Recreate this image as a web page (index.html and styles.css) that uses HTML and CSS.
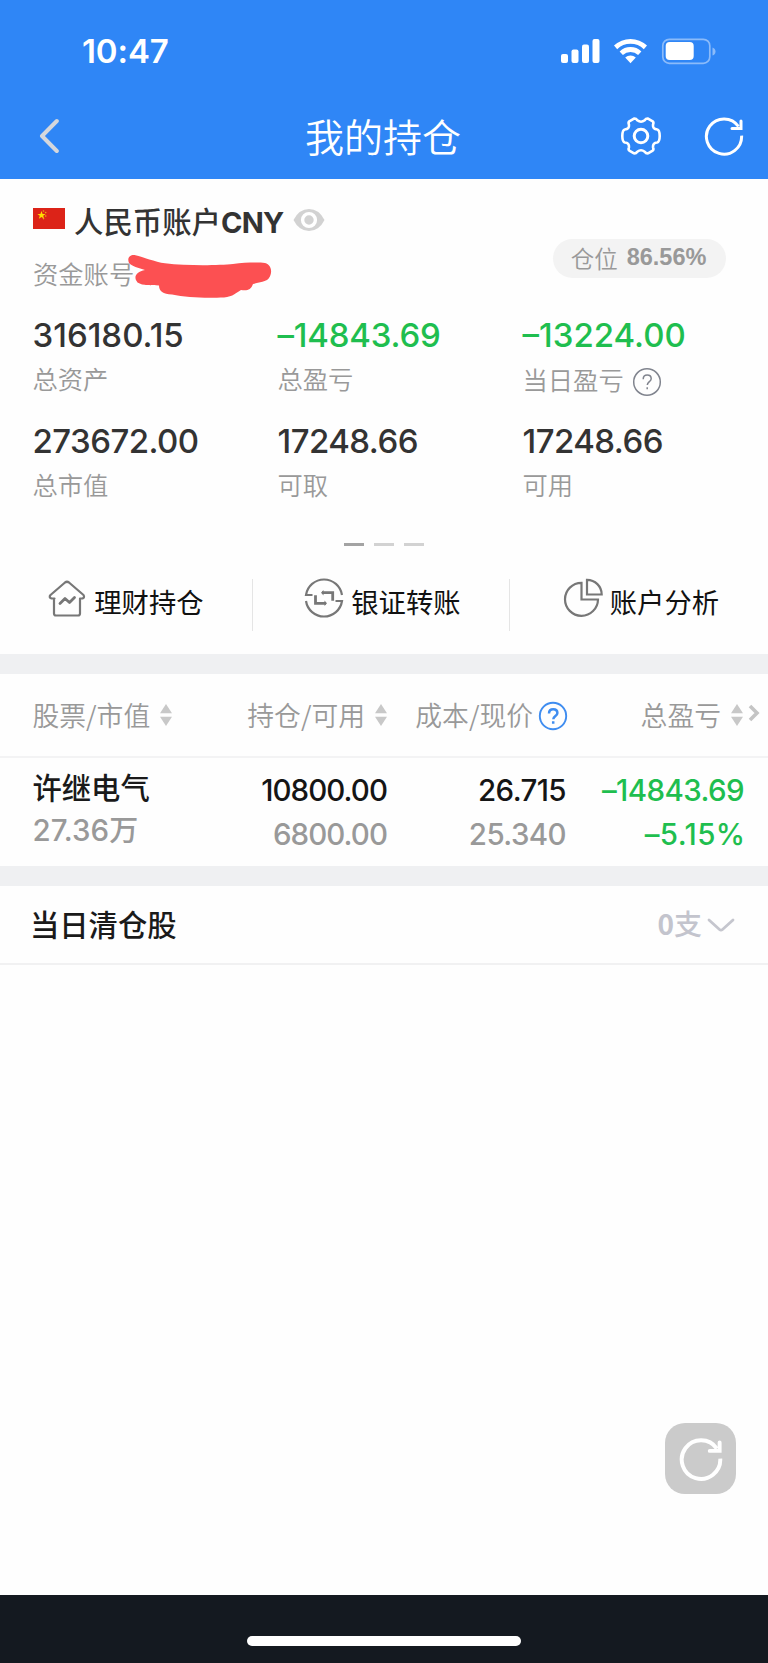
FILE: index.html
```html
<!DOCTYPE html>
<html lang="zh-CN">
<head>
<meta charset="utf-8">
<title>我的持仓</title>
<link rel="stylesheet" href="styles.css">
</head>
<body>
<svg width="0" height="0" class="defs">
  <symbol id="sort" viewBox="0 0 12 22"><path d="M6 0l6 9.3H0zM0 12.7h12L6 22z" fill="#c8c8c8"/></symbol>
  <symbol id="reload" viewBox="0 0 42 42">
    <path d="M38.6 20.6A17.6 17.6 0 1 1 35.500 11.500" fill="none" stroke="currentColor" stroke-linecap="butt"/>
    <path d="M38 6v7.600h-9" fill="none" stroke="currentColor" stroke-linecap="round"/>
  </symbol>
</svg>
<header class="header">
  <div class="status">
    <span class="time">10:47</span>
    <svg class="status-icons" width="156" height="26" viewBox="0 0 156 26" fill="#fff">
      <rect x="0" y="15" width="7" height="9" rx="2"/><rect x="10.5" y="10.5" width="7" height="13.5" rx="2"/><rect x="21" y="5.5" width="7" height="18.5" rx="2"/><rect x="31.5" y="0" width="7" height="24" rx="2"/>
      <path d="M53 6.6a24 24 0 0 1 33 0l-3.2 3.6a18.7 18.7 0 0 0-26.600 0z"/>
      <path d="M58.600 12.400a15.800 15.800 0 0 1 21.800 0l-3.300 3.700a10.900 10.900 0 0 0-15.200 0z"/>
      <path d="M64.200 18.600a8 8 0 0 1 10.600 0L69.500 24.300z"/>
      <rect x="101.800" y="0.300" width="47" height="24" rx="6.500" fill="none" stroke="#8bbbfa" stroke-width="1.700"/>
      <rect x="104.700" y="3" width="28" height="18" rx="4"/>
      <path d="M151.500 8.500q3 1 3 4t-3 4z" fill="#8bbbfa"/>
    </svg>
  </div>
  <div class="nav">
    <svg class="back" width="20" height="36" viewBox="0 0 20 36"><path d="M17.800 3L3 18L17.800 33" fill="none" stroke="#d5d7dc" stroke-width="4" stroke-linecap="round" stroke-linejoin="round"/></svg>
    <h1 class="title">我的持仓</h1>
    <svg class="gear" width="40" height="38" viewBox="0 0 40 38" fill="none" stroke="#fff" stroke-width="2.600" stroke-linejoin="round">
      <path d="M13 1.600Q15 1.300 16.300 3.300Q20 6.200 23.700 3.300Q25 1.300 27 1.600L31.700 4.300Q33 5.400 32 7.800Q31.600 12.300 36.200 12.500Q38.600 13 38.700 19Q38.600 25 36.200 25.500Q31.600 25.700 32 30.200Q33 32.500 31.700 33.600L27 36.300Q25 36.600 23.700 34.700Q20 31.800 16.300 34.700Q15 36.600 13 36.300L8.300 33.600Q7 32.500 8 30.200Q8.400 25.700 3.800 25.500Q1.400 25 1.300 19Q1.400 13 3.800 12.500Q8.400 12.300 8 7.800Q7 5.400 8.300 4.300Z"/>
      <circle cx="20" cy="19" r="6.800" stroke-width="3"/>
    </svg>
    <svg class="nav-reload" width="42" height="42"><use href="#reload"/></svg>
  </div>
</header>

<section class="account">
  <div class="account-head">
    <div class="account-id">
      <div class="currency">
        <svg class="flag" width="32" height="21" viewBox="0 0 32 21"><path fill="#dc2318" d="M0 0h32v21H0z"/><path fill="#ffde00" d="M8.500 3l1.100 2.900h3l-2.400 1.900.9 3-2.600-1.800-2.600 1.800.9-3-2.400-1.900h3z"/><g fill="#e9a413"><circle cx="10.500" cy="3" r=".8"/><circle cx="12.700" cy="4.600" r=".8"/><circle cx="12.700" cy="8" r=".8"/><circle cx="10.500" cy="10.600" r=".8"/></g></svg>
        <span class="currency-name">人民币账户<b class="latin">CNY</b></span>
        <svg class="eye" width="32" height="24" viewBox="0 0 32 24"><path d="M.5 12Q6 1 16 1t15.500 11Q26 23 16 23T.5 12z" fill="#d2d2d2"/><circle cx="16" cy="12" r="6.400" fill="none" stroke="#fff" stroke-width="3.400"/></svg>
      </div>
      <div class="fund">资金账号
        <svg class="scribble" width="146" height="46" viewBox="0 0 146 46"><path fill="#fc5052" d="M8.500 1.200C16 2.800 28 8 38 9.200C60 12 92 11.400 106 10C118 8.500 131 8.300 138 9C145 11 145.500 19 142 24C140 28 130 28.500 126 30C124 36 120 37 114 36C110 38 106 43 97 43.400C82 44 60 44 45 40.500C36 40 32 37 32 31.500C24 31 16 32 10.500 28.500C6 23 9 18 18 16C12 14 4 12 2 9C-.5 3 4 .2 8.500 1.200z"/></svg>
      </div>
    </div>
    <div class="pill">仓位 <b>86.56%</b></div>
  </div>
  <div class="stats">
    <div class="stat"><div class="num loose">316180.15</div><div class="label">总资产</div></div>
    <div class="stat"><div class="num green snug">–14843.69</div><div class="label">总盈亏</div></div>
    <div class="stat"><div class="num green loose">–13224.00</div><div class="label">当日盈亏<svg class="help" width="30" height="30" viewBox="0 0 30 30" fill="none" stroke="#80848e"><circle cx="15" cy="15" r="13.300" stroke-width="1.500"/><path d="M11.200 12.200q0-4.200 4-4.200t4 3.700c0 3-3.900 3-3.900 6.400M15.200 20.300v2" stroke-width="1.500"/></svg></div></div>
    <div class="stat"><div class="num">273672.00</div><div class="label">总市值</div></div>
    <div class="stat"><div class="num">17248.66</div><div class="label">可取</div></div>
    <div class="stat"><div class="num">17248.66</div><div class="label">可用</div></div>
  </div>
  <div class="pager"><i class="on"></i><i></i><i></i></div>
  <nav class="actions">
    <a class="action"><svg width="40" height="40" viewBox="0 0 40 40" fill="none" stroke="#777" stroke-width="2.200" stroke-linejoin="round" stroke-linecap="round"><path d="M7.500 20.500H4.500Q1.500 19.500 3.500 17L18 4.500Q20 3 22 4.500L36.500 17Q38 19.500 35.500 20.500H33V35.500Q33 37.500 31 37.500H9Q7 37.500 7 35.500V20.500"/><path d="M13 25.500L18 20.500L22.500 24.500L27.500 19.500" stroke-width="2.800"/></svg>理财持仓</a>
    <a class="action"><svg width="40" height="40" viewBox="0 0 40 40" fill="none" stroke="#777" stroke-width="2.200"><path d="M8.500 17H2A18.200 18.200 0 0 1 38 17M31.500 23H38A18.200 18.200 0 0 1 2 23"/><path d="M18 14.700H28.700V22.700M22 25.300H11.500V17.300" stroke-width="2.800"/><path d="M19.500 12v5.400l-2.500-2.700zM20.500 22.600v5.400l2.500-2.700z" fill="#777" stroke="none"/></svg>银证转账</a>
    <a class="action"><svg width="40" height="40" viewBox="0 0 40 40" fill="none" stroke="#777" stroke-width="2.200"><path d="M18.500 4.800A16.500 16.500 0 1 0 35 21.500H18.500z"/><path d="M24 1.800V16.500H38.700A14.700 14.700 0 0 0 24 1.800z"/></svg>账户分析</a>
  </nav>
</section>

<section class="holdings">
  <div class="cols thead">
    <div class="c1">股票/市值<svg class="sort"><use href="#sort"/></svg></div>
    <div class="c2">持仓/可用<svg class="sort"><use href="#sort"/></svg></div>
    <div class="c3">成本/现价<svg class="help-blue" width="30" height="30" viewBox="0 0 30 30" fill="none" stroke="#3f8df0"><circle cx="15" cy="15" r="13.200" stroke-width="1.900"/><path d="M11 12.400q0-4.200 4.200-4.200t4.200 3.800c0 3-4.100 3-4.100 6.300M15.200 20.200v2.600" stroke-width="2.500"/></svg></div>
    <div class="c4">总盈亏<svg class="sort"><use href="#sort"/></svg><svg class="more" width="12" height="20" viewBox="0 0 12 20"><path d="M2 3l7 7L2 17" fill="none" stroke="#c4c4c4" stroke-width="3.600"/></svg></div>
  </div>
  <div class="cols row">
    <div class="c1"><div class="name">许继电气</div><div class="sub value">27.36<span class="wan">万</span></div></div>
    <div class="c2"><div class="qty tight">10800.00</div><div class="qty tight sub">6800.00</div></div>
    <div class="c3"><div class="qty">26.715</div><div class="qty sub">25.340</div></div>
    <div class="c4 green"><div class="qty">–14843.69</div><div class="qty percent">–5.15%</div></div>
  </div>
</section>

<section class="cleared">
  <span class="cleared-title">当日清仓股</span>
  <span class="count"><b>0</b>支<svg width="28" height="16" viewBox="0 0 28 16"><path d="M2 3L12.500 12.500Q14 13.800 15.500 12.500L26 3" fill="none" stroke="#c5c6ce" stroke-width="2.800" stroke-linecap="round"/></svg></span>
</section>

<main class="blank">
  <button class="float"><svg width="46" height="46"><use href="#reload"/></svg></button>
</main>
<footer class="footer"><div class="home"></div></footer>
</body>
</html>
```
FILE: styles.css
```css
* { box-sizing: border-box; }
body {
  margin: 0;
  width: 768px;
  height: 1663px;
  display: flex;
  flex-direction: column;
  overflow: hidden;
  background: #fefefe;
  color: #333;
  font-family: "Noto Sans CJK SC", sans-serif;
}
svg { flex: none; display: block; }
.defs { position: absolute; }
.header { height: 179px; flex: none; background: #2f86f6; color: #fff; }
.status { height: 94px; padding: 39px 51px 0 82px; display: flex; justify-content: space-between; }
.time { font: 600 33px/25px Inter, sans-serif; letter-spacing: -0.100px; }
.status-icons { overflow: visible; }
.nav { height: 84px; padding: 0 23px 0 39px; display: flex; align-items: center; }
.title { margin: 0 160px 3px 246px; font-size: 39px; font-weight: 350; line-height: 78px; white-space: nowrap; }
.gear { overflow: visible; }
.nav-reload { margin-left: auto; stroke-width: 3; }

.account { height: 475px; flex: none; }
.account-head { height: 130px; padding: 19px 42px 0 33px; display: flex; justify-content: space-between; }
.currency { height: 44px; display: flex; align-items: center; }
.flag { margin: -3px 9px 0 0; }
.currency-name { font-size: 29.400px; font-weight: 500; line-height: 44px; white-space: nowrap; }
.latin { font: 700 29px/40px Inter, sans-serif; letter-spacing: -0.700px; }
.eye { margin-left: 9px; }
.fund { position: relative; margin-top: 11px; font-size: 25.300px; font-weight: 350; line-height: 40px; color: #999; white-space: nowrap; }
.scribble { position: absolute; left: 94px; top: 1px; }
.pill { width: 173px; height: 39px; margin-top: 41px; border-radius: 20px; background: #f3f3f3; color: #999; font-size: 23.500px; font-weight: 350; line-height: 36px; display: flex; align-items: center; justify-content: center; gap: 9px; padding: 0 2px 2px 0; white-space: nowrap; }
.pill b { font: 700 23.500px/37px "Liberation Sans", sans-serif; }
.stats { padding-left: 32.500px; display: grid; grid-template-columns: 245px 245px 245px; grid-auto-rows: 106px; }
.num { font: 500 33px/53px Inter, sans-serif; letter-spacing: -0.550px; }
.num.loose { letter-spacing: 0; }
.num.snug { letter-spacing: -0.200px; }
.label { display: flex; align-items: center; font-size: 25.300px; font-weight: 350; line-height: 33px; color: #999; }
.help { margin: 5px 0 0 8px; }
.green { color: #1fbe4f; }
.pager { height: 39px; padding-top: 22px; display: flex; justify-content: center; gap: 10px; }
.pager i { width: 20px; height: 2.500px; background: #d2d2d2; }
.pager .on { background: #a3a3a3; }
.actions { margin-top: 19px; height: 52px; display: grid; grid-template-columns: 253px 257px 258px; }
.action { display: flex; align-items: center; justify-content: flex-end; padding: 0 48.500px 7px 0; border-right: 1.500px solid #e5e5e5; font-size: 27.300px; line-height: 45px; color: #111; white-space: nowrap; }
.action svg { margin: -7px 7px 0 0; }
.action:last-child { border: 0; padding-right: 49px; }

.holdings { height: 212px; flex: none; border-top: 20px solid #eff0f2; }
.cols { display: grid; grid-template-columns: 212px 175px 179px 202px; }
.thead { height: 84px; border-bottom: 2px solid #f3f3f4; font-size: 26.800px; font-weight: 350; line-height: 80px; color: #999; white-space: nowrap; }
.thead > div { display: flex; align-items: center; }
.thead .c2, .thead .c3, .thead .c4 { justify-content: flex-end; }
.c1 { padding-left: 32.500px; }
.sort { width: 12px; height: 22px; margin-left: 10px; }
.help-blue { margin: 2px -2px 0 5px; }
.more { margin: -4px 8px 0 5px; }
.row { height: 108px; padding-top: 8px; }
.row .c2, .row .c3, .row .c4 { text-align: right; padding-top: 2px; }
.row .c4 { padding-right: 24px; }
.name { font-size: 29.300px; font-weight: 500; line-height: 41px; color: #1a1a1a; }
.value { font: 450 29.500px/46px Inter, sans-serif; }
.wan { font-family: "Noto Sans CJK SC", sans-serif; font-size: 29px; line-height: 30px; }
.qty { font: 500 29.500px/44px Inter, sans-serif; letter-spacing: -0.600px; color: #151515; }
.tight { letter-spacing: -0.950px; }
.percent { letter-spacing: 0.400px; margin-right: -1.500px; }
.row .sub { color: #999; }
.green .qty { color: #1fbe4f; }

.cleared { height: 99px; flex: none; border-top: 20px solid #eff0f2; border-bottom: 2px solid #f1f1f2; padding: 0 33px 3px 30px; display: flex; justify-content: space-between; align-items: center; }
.cleared-title { font-size: 29.300px; font-weight: 500; line-height: 44px; color: #1a1a1a; }
.count { display: flex; align-items: center; font-size: 28px; font-weight: 500; line-height: 44px; color: #c3c4cd; }
.count svg { margin: 3px 0 0 5px; }
.blank { flex: 1; display: flex; justify-content: flex-end; align-items: flex-end; padding: 0 32px 101px 0; }
.float { width: 71px; height: 71px; padding: 0; border: 0; border-radius: 20px; background: #cbcbcb; color: #fff; display: flex; align-items: center; justify-content: center; stroke-width: 3.600; }
.footer { height: 68px; flex: none; background: #141920; padding-top: 41px; }
.home { width: 274px; height: 10px; margin: 0 auto; border-radius: 5px; background: #fff; }
```
